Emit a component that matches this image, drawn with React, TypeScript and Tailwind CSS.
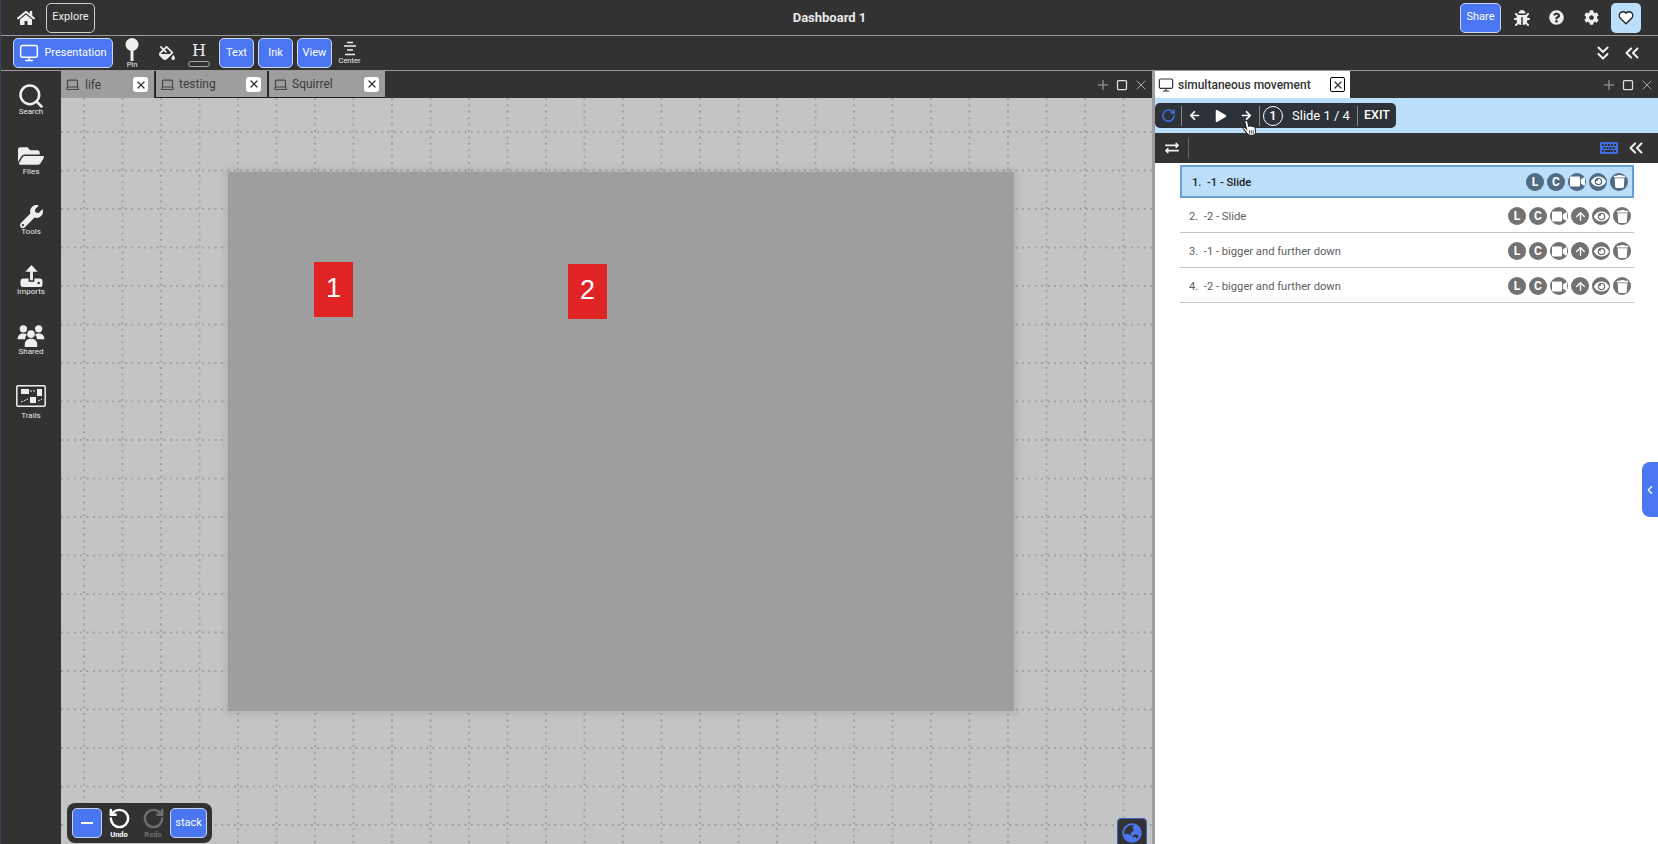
import {
  FaArrowLeft,
  FaArrowRight,
  FaBug,
  FaCog,
  FaExchangeAlt,
  FaEye,
  FaFillDrip,
  FaFolderOpen,
  FaGlobeAsia,
  FaHome,
  FaKeyboard,
  FaPlay,
  FaQuestionCircle,
  FaTrash,
  FaVideo,
  FaWrench,
} from 'react-icons/fa'
import { ArrowUp, ChevronLeft, ChevronsDown, ChevronsLeft, Laptop, Monitor, Plus, RotateCcw, RotateCw, Search, Square, X } from 'lucide-react'

const slides = [
  { label: '1.  -1 - Slide', active: true },
  { label: '2.  -2 - Slide', active: false },
  { label: '3.  -1 - bigger and further down', active: false },
  { label: '4.  -2 - bigger and further down', active: false },
]

const CloseBox = ({ dark = false }: { dark?: boolean }) => (
  <span
    className={
      dark
        ? 'flex h-[15px] w-[15px] items-center justify-center rounded-[2px] border border-black bg-white'
        : 'flex h-[15px] w-[15px] items-center justify-center rounded-[3px] bg-white'
    }
  >
    <X size={12} strokeWidth={2.5} className="text-[#333]" />
  </span>
)

const BlueButton = ({ children, className }: { children: React.ReactNode; className: string }) => (
  <div
    className={`flex h-[30px] items-center justify-center rounded-[5px] border border-[#c9d6f5] bg-[#4a76f2] text-[11px] text-white ${className}`}
  >
    {children}
  </div>
)

const SideItem = ({ label, icon }: { label: string; icon: React.ReactNode }) => (
  <div className="flex h-[60px] flex-col items-center">
    <div className="flex h-[30px] w-full shrink-0 items-center justify-center text-[#eeeeee]">{icon}</div>
    <span className="-mt-[5px] text-[8px] leading-[12px] text-[#e6e6e6]">{label}</span>
  </div>
)

const DocTab = ({ label, width, first }: { label: string; width: string; first?: boolean }) => (
  <div
    className={`flex h-[27px] items-center bg-[#9e9e9e] pl-[4px] pr-[6px] text-[#3c3c3c] ${width} ${first ? '' : 'border-b border-l border-[#222]'}`}
  >
    <Laptop size={15} strokeWidth={1.8} className="text-[#444]" />
    <span className={`flex-1 text-[12px] ${first ? 'ml-[5px]' : 'ml-[4px]'}`}>{label}</span>
    <CloseBox />
  </div>
)

const PanelControls = () => (
  <div className="ml-auto flex items-center gap-[5px] pr-[3px] text-[#a8a8a8]">
    <Plus size={16} strokeWidth={1.5} />
    <Square size={12} strokeWidth={2.5} className="text-[#e0e0e0]" />
    <X size={16} strokeWidth={1.5} />
  </div>
)

const RoundIcon = ({ active, children }: { active: boolean; children: React.ReactNode }) => (
  <span
    className={`flex h-[18px] w-[18px] items-center justify-center overflow-hidden rounded-full text-[12px] font-bold text-white ${active ? 'bg-[#4f6b84]' : 'bg-[#727272]'}`}
  >
    {children}
  </span>
)

const SlideRow = ({ label, active }: { label: string; active: boolean }) => (
  <div
    className={
      active
        ? 'flex h-[33px] items-center border-2 border-[#6a9fd6] bg-[#bbdefb] pl-[10px] pr-[4px]'
        : 'flex h-[35px] items-center border-b border-[#c4c4c4] pl-[9px] pr-[3px] pt-[2px]'
    }
  >
    <span
      className={`whitespace-pre text-[11.2px] ${active ? 'pt-[3px] font-medium text-[#222]' : 'pt-[2px] text-[#5e5e5e]'}`}
    >
      {label}
    </span>
    <div className="ml-auto flex items-center gap-[3px]">
      <RoundIcon active={active}>L</RoundIcon>
      <RoundIcon active={active}>C</RoundIcon>
      <RoundIcon active={active}>
        <FaVideo size={15} />
      </RoundIcon>
      {!active && (
        <RoundIcon active={active}>
          <ArrowUp size={13} strokeWidth={2.5} />
        </RoundIcon>
      )}
      <RoundIcon active={active}>
        <FaEye size={15} />
      </RoundIcon>
      <RoundIcon active={active}>
        <FaTrash size={13} />
      </RoundIcon>
    </div>
  </div>
)

export default function App() {
  return (
    <div className="relative flex h-screen w-full flex-col overflow-hidden border-l border-[#3b4560] bg-[#323232] font-['Roboto',sans-serif]">
      {/* top bar */}
      <header className="relative flex h-[36px] shrink-0 items-center border-b border-[#9a9a9a] pl-[16px] pr-[17px]">
        <FaHome size={18} className="text-[#f0f0f0]" />
        <div className="ml-[11px] flex h-[30px] w-[49px] items-center justify-center rounded-[5px] border border-[#cfcfcf] text-[11px] text-[#eee]">
          Explore
        </div>
        <span className="absolute left-0 right-0 text-center text-[13px] font-bold text-[#e8e8e8]">Dashboard 1</span>
        <div className="ml-auto flex items-center">
          <BlueButton className="w-[41px]">Share</BlueButton>
          <FaBug size={16} className="ml-[13px] text-[#eee]" />
          <FaQuestionCircle size={15} className="ml-[19px] text-[#eee]" />
          <FaCog size={15} className="ml-[20px] text-[#eee]" />
          <div className="relative ml-[12px] flex h-[30px] w-[30px] items-center justify-center rounded-[5px] bg-[#bbdefb]">
            <svg width="16" height="15" viewBox="0 0 24 22">
              <path
                d="M12 20.500 3.500 12a5.600 5.600 0 0 1 0-8 5.600 5.600 0 0 1 8 0l.5.6.5-.6a5.600 5.600 0 0 1 8 0 5.600 5.600 0 0 1 0 8z"
                fill="#fff"
                stroke="#222"
                strokeWidth="2"
              />
            </svg>
          </div>
        </div>
      </header>

      {/* tool bar */}
      <div className="flex h-[35px] shrink-0 items-center border-b border-[#9a9a9a] pl-[12px] pr-[15px]">
        <BlueButton className="w-[100px] gap-[5px]">
          <Monitor size={20} strokeWidth={1.8} />
          Presentation
        </BlueButton>
        <div className="ml-[11px] flex w-[16px] flex-col items-center text-[#eee]">
          <svg width="14" height="23" viewBox="0 0 14 23">
            <circle cx="7" cy="6.500" r="6.500" fill="#eee" />
            <rect x="5.500" y="12" width="3" height="11" fill="#eee" />
          </svg>
          <span className="text-[7.5px] leading-[8px]">Pin</span>
        </div>
        <FaFillDrip size={16} className="ml-[19px] text-[#eee]" />
        <div className="ml-[14px] flex w-[20px] flex-col items-center pt-[2px] text-[#eee]">
          <span className="font-['DejaVu_Serif',serif] text-[16px] leading-[17px]">H</span>
          <span className="mt-[2px] h-[6px] w-[22px] shrink-0 rounded-full border border-[#aaa]" />
        </div>
        <BlueButton className="ml-[10px] w-[35px]">Text</BlueButton>
        <BlueButton className="ml-[4px] w-[35px]">Ink</BlueButton>
        <BlueButton className="ml-[4px] w-[35px]">View</BlueButton>
        <div className="ml-[5px] flex w-[25px] flex-col items-center text-[#eee]">
          <svg width="14" height="15" viewBox="0 0 14 15" stroke="#eee" strokeWidth="1.6">
            <path d="M4 1.500h6M1 5h12M4 9h6M2 13.500h10" />
          </svg>
          <span className="text-[7.5px] leading-[9px]">Center</span>
        </div>
        <div className="ml-auto flex items-center gap-[7px] text-[#eee]">
          <ChevronsDown size={22} strokeWidth={2.2} />
          <ChevronsLeft size={22} strokeWidth={2.2} />
        </div>
      </div>

      <div className="flex min-h-0 flex-1">
        {/* left rail */}
        <aside className="flex w-[60px] shrink-0 flex-col pt-[10px]">
          <SideItem label="Search" icon={<Search size={28} strokeWidth={2.2} />} />
          <SideItem label="Files" icon={<FaFolderOpen size={26} />} />
          <SideItem label="Tools" icon={<FaWrench size={23} />} />
          <SideItem
            label="Imports"
            icon={
              <svg width="23" height="22" viewBox="0 0 23 23" fill="#eee">
                <path d="M11.500 0 5 7h5v9h3V7h5z" />
                <path fillRule="evenodd" d="M3 14h5.500v3.500h6V14H20a3 3 0 0 1 3 3v3a3 3 0 0 1-3 3H3a3 3 0 0 1-3-3v-3a3 3 0 0 1 3-3zm16 3.500a1.300 1.300 0 1 0 0 2.600 1.300 1.300 0 0 0 0-2.600z" />
              </svg>
            }
          />
          <SideItem
            label="Shared"
            icon={
              <svg width="28" height="22" viewBox="0 0 28 23" fill="#eee">
                <circle cx="6" cy="4" r="3.800" />
                <circle cx="22" cy="4" r="3.800" />
                <path d="M0 15c0-4 2.500-6 6-6 1.500 0 2.800.3 3.800 1A6 6 0 0 0 8 15z" />
                <path d="M28 15c0-4-2.500-6-6-6-1.500 0-2.800.3-3.800 1a6 6 0 0 1 1.800 5z" />
                <circle cx="14" cy="9.500" r="4" />
                <path d="M7.500 23v-2.500c0-4 2.800-6 6.500-6s6.500 2 6.500 6V23z" />
              </svg>
            }
          />
          <div className="flex flex-col items-center">
            <svg width="30" height="22" viewBox="0 0 30 22" className="mt-[4px]">
              <rect x="0.800" y="0.800" width="28.400" height="20.400" rx="1" fill="#323232" stroke="#eee" strokeWidth="1.500" />
              <rect x="5" y="4" width="8" height="5" fill="#eee" />
              <rect x="21" y="4" width="5" height="7" fill="#eee" />
              <rect x="14" y="12" width="6" height="6" fill="#eee" />
              <path d="M14 6h6M5 17l7-3M22 16l4-2" stroke="#eee" strokeWidth="1" strokeDasharray="2 1" />
            </svg>
            <span className="mt-[3px] text-[8px] leading-[12px] text-[#e6e6e6]">Trails</span>
          </div>
        </aside>

        {/* canvas panel */}
        <section className="flex w-[1091px] shrink-0 flex-col">
          <div className="flex h-[27px] shrink-0 items-center">
            <DocTab label="life" width="w-[93px]" first />
            <div className="w-px" />
            <DocTab label="testing" width="w-[112px]" />
            <div className="w-px" />
            <DocTab label="Squirrel" width="w-[117px]" />
            <PanelControls />
          </div>
          <div className="relative flex-1 bg-[#c4c4c4] bg-[radial-gradient(circle_at_1px_1px,#a0a0a0_0.8px,transparent_1.4px),radial-gradient(circle_at_1px_1px,#a0a0a0_0.8px,transparent_1.4px)] bg-[size:38.5px_6.417px,6.417px_38.5px] bg-[position:22px_0px,0px_33px]">
            <div className="absolute left-[167px] top-[74px] h-[539px] w-[786px] bg-[#9e9e9e] shadow-[0_0_6px_4px_rgba(0,0,0,0.07)]">
              <div className="absolute left-[86px] top-[90px] flex h-[55px] w-[39px] items-center justify-center bg-[#e02323] pb-[3px] font-['Liberation_Sans',sans-serif] text-[27px] text-white">
                1
              </div>
              <div className="absolute left-[340px] top-[92px] flex h-[55px] w-[39px] items-center justify-center bg-[#e02323] pb-[3px] font-['Liberation_Sans',sans-serif] text-[27px] text-white">
                2
              </div>
            </div>

            {/* undo / redo floating bar */}
            <div className="absolute bottom-[1px] left-[6px] flex h-[40px] w-[145px] items-center rounded-[8px] bg-[#323232] pl-[5px]">
              <BlueButton className="w-[30px]">
                <span className="h-[2px] w-[12px] bg-white" />
              </BlueButton>
              <div className="ml-[2px] flex w-[30px] flex-col items-center text-white">
                <RotateCcw size={23} strokeWidth={2.6} />
                <span className="text-[7.5px] font-bold leading-[9px]">Undo</span>
              </div>
              <div className="ml-[4px] flex w-[30px] flex-col items-center text-[#6e6e6e]">
                <RotateCw size={23} strokeWidth={2.6} />
                <span className="text-[7.5px] font-bold leading-[9px]">Redo</span>
              </div>
              <BlueButton className="ml-[2px] w-[37px] text-[11.5px]">stack</BlueButton>
            </div>

            <div className="absolute -bottom-[4px] left-[1056px] flex h-[30px] w-[30px] items-center justify-center rounded-[4px] border border-[#3a62c0] bg-[#323232]">
              <FaGlobeAsia size={20} className="text-[#4a76f2]" />
            </div>
          </div>
        </section>

        {/* slides panel */}
        <section className="flex min-w-0 flex-1 flex-col border-l-[3px] border-[#9e9e9e] bg-white">
          <div className="flex h-[27px] shrink-0 items-center bg-[#323232]">
            <div className="flex h-full w-[195px] items-center bg-white pl-[3px] pr-[5px]">
              <Monitor size={16} strokeWidth={1.8} className="text-[#333]" />
              <span className="ml-[4px] flex-1 text-[12px] font-medium text-[#333]">simultaneous movement</span>
              <CloseBox dark />
            </div>
            <PanelControls />
          </div>
          <div className="flex h-[35px] shrink-0 items-center bg-[#bbdefb]">
            <div className="relative flex h-[25px] w-[241px] items-center rounded-[5px] bg-[#2c3238] text-white">
              <RotateCw size={15} strokeWidth={2.4} className="ml-[6px] text-[#3f6fe0]" />
              <span className="ml-[5px] h-[20px] w-px bg-[#888]" />
              <FaArrowLeft size={11} className="ml-[7px]" />
              <FaPlay size={12} className="ml-[15px]" />
              <FaArrowRight size={11} className="ml-[14px]" />
              <span className="ml-[7px] h-[20px] w-px bg-[#888]" />
              <span className="ml-[3px] flex h-[20px] w-[20px] items-center justify-center rounded-full border border-white text-[13px] font-medium">
                1
              </span>
              <span className="ml-[9px] text-[13px]">Slide 1 / 4</span>
              <span className="ml-[7px] h-[20px] w-px bg-[#888]" />
              <span className="ml-[6px] text-[12.5px] font-medium">EXIT</span>
              <svg width="16" height="18" viewBox="0 0 14 16" className="absolute left-[87px] top-[16px]">
                <path
                  d="M3 1.500c1-.6 1.800 0 2 1l.8 4c.8-.7 1.500-.7 2 0 .8-.5 1.500-.4 2 .3.900-.2 1.500.2 1.700 1l.5 3.700c.2 1.700-1 3-2.800 3H7c-1.200 0-2-.5-2.600-1.500L1 8.500c-.4-.8.700-1.700 1.500-1L4 9 2.500 3c-.1-.7 0-1.200.5-1.500z"
                  fill="#fff"
                  stroke="#222"
                  strokeWidth="0.9"
                />
                <path d="M6.500 10v3M8.200 10v3M9.900 10v3" stroke="#333" strokeWidth="0.8" />
              </svg>
            </div>
          </div>
          <div className="flex h-[30px] shrink-0 items-center bg-[#323232] pl-[10px] pr-[11px] text-[#eee]">
            <FaExchangeAlt size={14} />
            <span className="ml-[9px] h-[20px] w-px bg-[#666]" />
            <FaKeyboard size={18} className="ml-auto text-[#3f6fe0]" />
            <ChevronsLeft size={22} strokeWidth={2.2} className="ml-[7px]" />
          </div>
          <div className="flex flex-col pl-[25px] pr-[24px] pt-[2px]">
            {slides.map((s) => (
              <SlideRow key={s.label} label={s.label} active={s.active} />
            ))}
          </div>
        </section>
      </div>

      {/* side drawer handle */}
      <div className="absolute right-0 top-[462px] flex h-[55px] w-[16px] items-center justify-center rounded-l-[8px] bg-[#4a76f2] text-white">
        <ChevronLeft size={14} strokeWidth={2} />
      </div>
    </div>
  )
}
